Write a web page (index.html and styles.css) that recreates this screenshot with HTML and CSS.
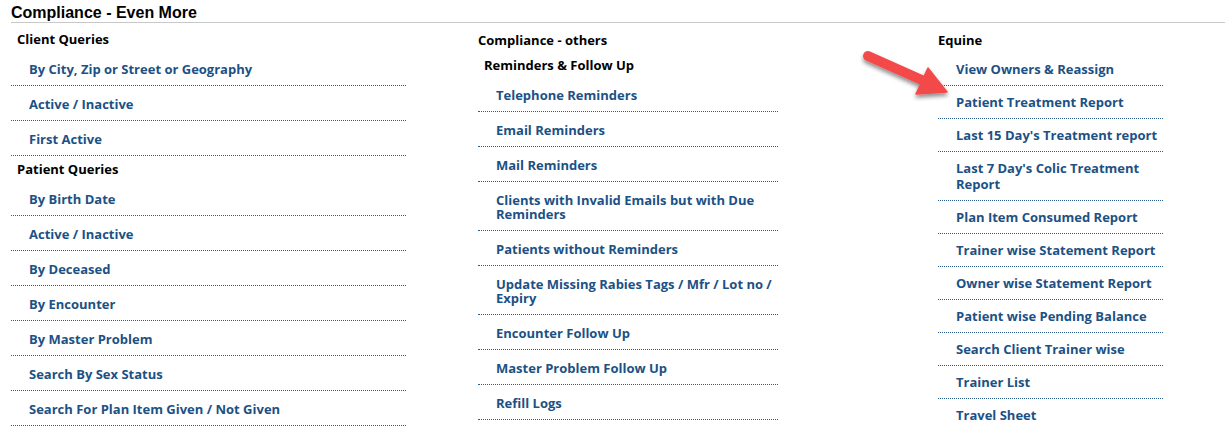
FILE: index.html
```html
<!DOCTYPE html>
<html>
<head>
<meta charset="utf-8">
<link rel="stylesheet" href="styles.css">
</head>
<body>
<div class="page">
  <h1 class="title">Compliance - Even More</h1>
  <div class="cols">
    <div class="col col1">
      <div class="group">Client Queries</div>
      <ul class="links">
        <li><a>By City, Zip or Street or Geography</a></li>
        <li><a>Active / Inactive</a></li>
        <li><a>First Active</a></li>
      </ul>
      <div class="group">Patient Queries</div>
      <ul class="links">
        <li><a>By Birth Date</a></li>
        <li><a>Active / Inactive</a></li>
        <li><a>By Deceased</a></li>
        <li><a>By Encounter</a></li>
        <li><a>By Master Problem</a></li>
        <li><a>Search By Sex Status</a></li>
        <li><a>Search For Plan Item Given / Not Given</a></li>
      </ul>
    </div>
    <div class="col col2">
      <div class="coltitle">Compliance - others</div>
      <div class="group">Reminders &amp; Follow Up</div>
      <ul class="links">
        <li><a>Telephone Reminders</a></li>
        <li><a>Email Reminders</a></li>
        <li><a>Mail Reminders</a></li>
        <li><a>Clients with Invalid Emails but with Due Reminders</a></li>
        <li><a>Patients without Reminders</a></li>
        <li><a>Update Missing Rabies Tags / Mfr / Lot no / Expiry</a></li>
        <li><a>Encounter Follow Up</a></li>
        <li><a>Master Problem Follow Up</a></li>
        <li><a>Refill Logs</a></li>
      </ul>
    </div>
    <div class="col col3">
      <div class="coltitle">Equine</div>
      <ul class="links compact">
        <li><a>View Owners &amp; Reassign</a></li>
        <li><a>Patient Treatment Report</a></li>
        <li><a>Last 15 Day's Treatment report</a></li>
        <li><a>Last 7 Day's Colic Treatment Report</a></li>
        <li><a>Plan Item Consumed Report</a></li>
        <li><a>Trainer wise Statement Report</a></li>
        <li><a>Owner wise Statement Report</a></li>
        <li><a>Patient wise Pending Balance</a></li>
        <li><a>Search Client Trainer wise</a></li>
        <li><a>Trainer List</a></li>
        <li><a>Travel Sheet</a></li>
      </ul>
    </div>
  </div>
  <svg class="arrow" width="110" height="70" viewBox="0 0 110 70">
    <defs>
      <filter id="sh" x="-30%" y="-30%" width="160%" height="160%">
        <feGaussianBlur in="SourceAlpha" stdDeviation="2.2"/>
        <feOffset dx="0" dy="3" result="b"/>
        <feComponentTransfer><feFuncA type="linear" slope="0.45"/></feComponentTransfer>
        <feMerge><feMergeNode/><feMergeNode in="SourceGraphic"/></feMerge>
      </filter>
    </defs>
    <g filter="url(#sh)">
      <line x1="18" y1="16" x2="74" y2="41" stroke="#f44a4a" stroke-width="10" stroke-linecap="round"/>
      <polygon points="78,28 97,52 66,54" fill="#f44a4a" stroke="#f44a4a" stroke-width="1.5" stroke-linejoin="round"/>
    </g>
  </svg>
</div>
</body>
</html>
```

FILE: styles.css
```css
html, body {
  margin: 0;
  padding: 0;
  background: #ffffff;
}

.page {
  position: relative;
  padding-left: 11px;
  width: 1214px;
}

.title {
  margin: 0;
  padding-top: 4px;
  font-family: "Liberation Sans", Arial, sans-serif;
  font-weight: bold;
  font-size: 16px;
  line-height: 18px;
  color: #000;
  border-bottom: 1px solid #c8c8c8;
}

.cols {
  display: grid;
  grid-template-columns: 467px 460px 300px;
  padding-top: 3px;
  font-family: "Open Sans", "Noto Sans", sans-serif;
  font-size: 13px;
  font-weight: 700;
  line-height: 16px;
}

.col1 .links { width: 395px; }
.col2 .links { width: 300px; }
.col3 .links { width: 225px; }

.coltitle {
  color: #000;
  padding: 6px 0 4px 0;
}

.col3 .coltitle {
  padding-bottom: 5px;
}

.group {
  color: #000;
  padding: 5px 6px 4px 6px;
}

.links {
  list-style: none;
  margin: 0;
  padding: 0;
}

.links li {
  padding: 11px 0 9px 18px;
  line-height: 14px;
  border-bottom: 1px dotted #2b5d90;
}

.links.compact li {
  padding: 8px 0 8px 18px;
  line-height: 16px;
}

.links.compact li:last-child {
  border-bottom: none;
}

.links a {
  color: #1c5185;
  text-decoration: none;
}

.arrow {
  position: absolute;
  left: 850px;
  top: 40px;
}
```
